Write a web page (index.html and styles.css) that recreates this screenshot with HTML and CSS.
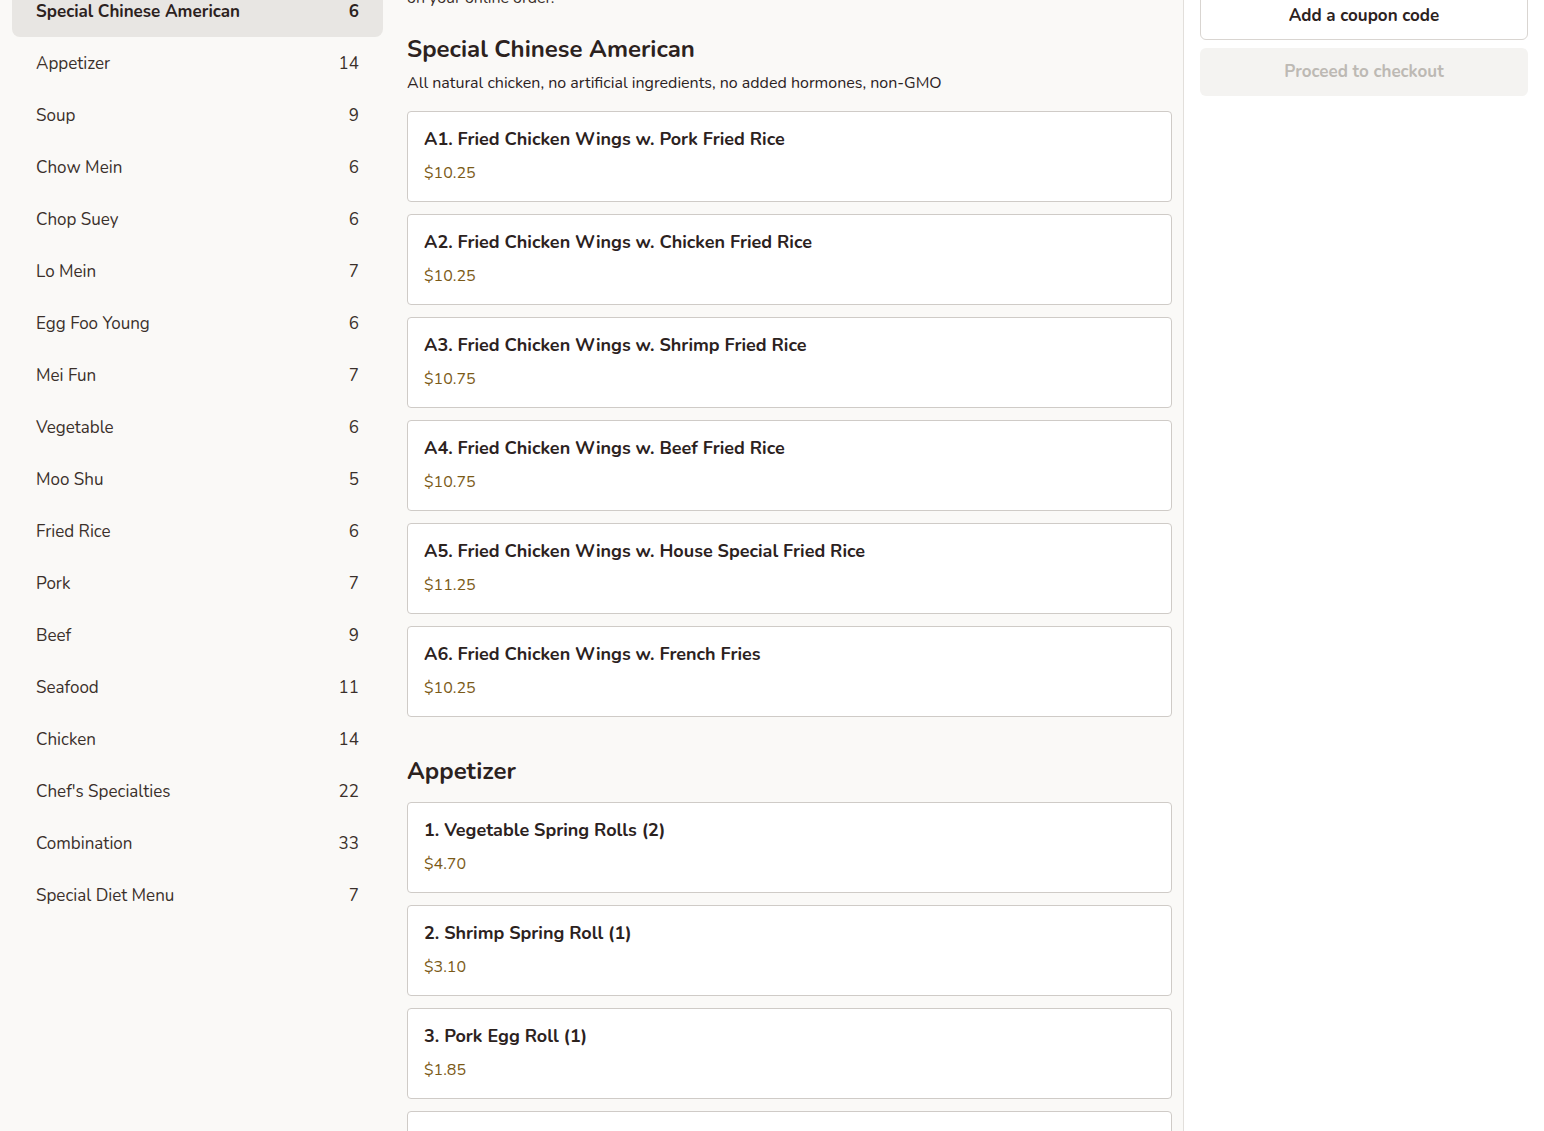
FILE: index.html
```html
<!DOCTYPE html>
<html lang="en">
<head>
<meta charset="utf-8">
<title>Menu</title>
<link rel="stylesheet" href="styles.css">
</head>
<body>
<div class="layout">
  <nav class="sidebar">
    <ul class="cats">
      <li class="cat active"><span>Special Chinese American</span><span>6</span></li>
      <li class="cat"><span>Appetizer</span><span>14</span></li>
      <li class="cat"><span>Soup</span><span>9</span></li>
      <li class="cat"><span>Chow Mein</span><span>6</span></li>
      <li class="cat"><span>Chop Suey</span><span>6</span></li>
      <li class="cat"><span>Lo Mein</span><span>7</span></li>
      <li class="cat"><span>Egg Foo Young</span><span>6</span></li>
      <li class="cat"><span>Mei Fun</span><span>7</span></li>
      <li class="cat"><span>Vegetable</span><span>6</span></li>
      <li class="cat"><span>Moo Shu</span><span>5</span></li>
      <li class="cat"><span>Fried Rice</span><span>6</span></li>
      <li class="cat"><span>Pork</span><span>7</span></li>
      <li class="cat"><span>Beef</span><span>9</span></li>
      <li class="cat"><span>Seafood</span><span>11</span></li>
      <li class="cat"><span>Chicken</span><span>14</span></li>
      <li class="cat"><span>Chef's Specialties</span><span>22</span></li>
      <li class="cat"><span>Combination</span><span>33</span></li>
      <li class="cat"><span>Special Diet Menu</span><span>7</span></li>
    </ul>
  </nav>

  <main class="menu">
    <p class="notice">on your online order.</p>

    <section class="section">
      <h2 class="section-title">Special Chinese American</h2>
      <p class="section-desc">All natural chicken, no artificial ingredients, no added hormones, non-GMO</p>
      <div class="items">
        <div class="item"><div class="item-name">A1. Fried Chicken Wings w. Pork Fried Rice</div><div class="item-price">$10.25</div></div>
        <div class="item"><div class="item-name">A2. Fried Chicken Wings w. Chicken Fried Rice</div><div class="item-price">$10.25</div></div>
        <div class="item"><div class="item-name">A3. Fried Chicken Wings w. Shrimp Fried Rice</div><div class="item-price">$10.75</div></div>
        <div class="item"><div class="item-name">A4. Fried Chicken Wings w. Beef Fried Rice</div><div class="item-price">$10.75</div></div>
        <div class="item"><div class="item-name">A5. Fried Chicken Wings w. House Special Fried Rice</div><div class="item-price">$11.25</div></div>
        <div class="item"><div class="item-name">A6. Fried Chicken Wings w. French Fries</div><div class="item-price">$10.25</div></div>
      </div>
    </section>

    <section class="section">
      <h2 class="section-title">Appetizer</h2>
      <div class="items nodesc">
        <div class="item"><div class="item-name">1. Vegetable Spring Rolls (2)</div><div class="item-price">$4.70</div></div>
        <div class="item"><div class="item-name">2. Shrimp Spring Roll (1)</div><div class="item-price">$3.10</div></div>
        <div class="item"><div class="item-name">3. Pork Egg Roll (1)</div><div class="item-price">$1.85</div></div>
        <div class="item"><div class="item-name">4. Chicken Egg Roll (1)</div><div class="item-price">$1.85</div></div>
      </div>
    </section>
  </main>

  <aside class="cart">
    <button class="btn coupon">Add a coupon code</button>
    <button class="btn checkout" disabled>Proceed to checkout</button>
  </aside>
</div>
</body>
</html>
```

FILE: styles.css
```css
* { box-sizing: border-box; }

html, body {
  margin: 0;
  padding: 0;
  height: 100%;
  overflow: hidden;
}

body {
  background: #faf9f7;
  color: #2c221e;
  font-family: "Nunito", "Lato", "Liberation Sans", sans-serif;
  font-size: 16px;
}

.layout {
  display: flex;
  align-items: flex-start;
  min-height: 1200px;
}

/* Sidebar */
.sidebar {
  width: 395px;
  flex: none;
  padding: 0 12px;
  margin-top: -15px;
}

.cats {
  list-style: none;
  margin: 0;
  padding: 0;
}

.cat {
  display: flex;
  justify-content: space-between;
  align-items: center;
  height: 52px;
  padding: 0 24px;
  border-radius: 8px;
  color: #3a302b;
  font-size: 17px;
}

.cat.active {
  background: #e8e6e3;
  font-weight: 700;
  color: #2c221e;
}

/* Menu */
.menu {
  width: 788px;
  flex: none;
  padding: 0 11px 0 12px;
  margin-top: -14px;
}

.notice {
  margin: 0;
  line-height: 24px;
  font-size: 16px;
  color: #3a302b;
}

.section-title {
  margin: 23px 0 0;
  font-size: 24px;
  line-height: 32px;
  font-weight: 700;
  color: #2c221e;
}

.section + .section .section-title {
  margin-top: 38px;
}

.section-desc {
  margin: 6px 0 0;
  line-height: 24px;
  font-size: 16px;
  color: #2c221e;
}

.items {
  display: flex;
  flex-direction: column;
  gap: 12px;
  margin-top: 16px;
}

.items.nodesc {
  margin-top: 15px;
}

.item {
  background: #fff;
  border: 1px solid #cfcbc7;
  border-radius: 4px;
  padding: 15px 16px 15px;
  height: 91px;
}

.item-name {
  font-size: 18px;
  line-height: 24px;
  font-weight: 700;
  color: #2c221e;
}

.item-price {
  margin-top: 10px;
  font-size: 16px;
  line-height: 24px;
  color: #7b5a17;
}

/* Cart */
.cart {
  flex: 1;
  align-self: stretch;
  background: #fff;
  border-left: 1px solid #e2dfdb;
  padding: 0 16px;
  display: flex;
  flex-direction: column;
  gap: 8px;
}

.btn {
  display: block;
  width: 100%;
  height: 48px;
  padding: 0 16px 2px;
  border-radius: 6px;
  font-family: inherit;
  font-size: 17px;
  font-weight: 700;
}

.coupon {
  margin-top: -8px;
  background: #fff;
  border: 1px solid #d9d5d1;
  color: #2c221e;
}

.checkout {
  background: #f4f3f1;
  border: none;
  color: #bdb9b4;
}
```
